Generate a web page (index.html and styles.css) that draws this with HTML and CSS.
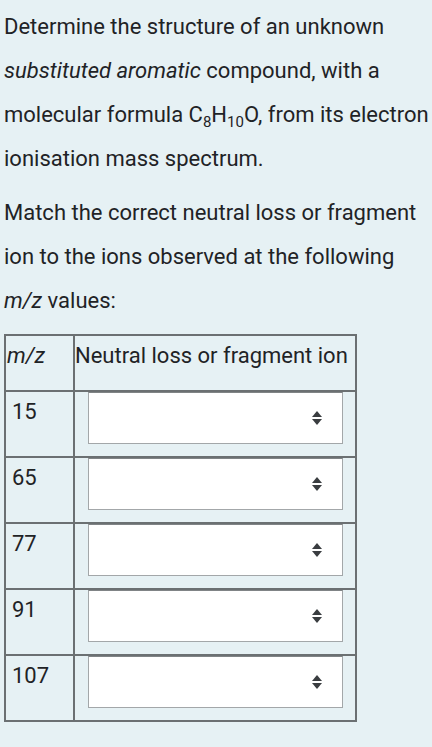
FILE: index.html
```html
<!DOCTYPE html>
<html lang="en">
<head>
<meta charset="utf-8">
<title>Mass spectrum question</title>
<link rel="stylesheet" href="styles.css">
</head>
<body>
<main class="question">
  <p class="para">Determine the structure of an unknown <em>substituted aromatic</em> compound, with a molecular formula C<sub>8</sub>H<sub>10</sub>O, from its electron ionisation mass spectrum.</p>
  <p class="para">Match the correct neutral loss or fragment ion to the ions observed at the following <em>m/z</em> values:</p>
  <table class="match">
    <thead>
      <tr>
        <th class="col-mz"><em>m/z</em></th>
        <th class="col-ion">Neutral loss or fragment ion</th>
      </tr>
    </thead>
    <tbody>
      <tr><td class="mz">15</td><td class="ion"><div class="select"><span class="arrows"></span></div></td></tr>
      <tr><td class="mz">65</td><td class="ion"><div class="select"><span class="arrows"></span></div></td></tr>
      <tr><td class="mz">77</td><td class="ion"><div class="select"><span class="arrows"></span></div></td></tr>
      <tr><td class="mz">91</td><td class="ion"><div class="select"><span class="arrows"></span></div></td></tr>
      <tr><td class="mz">107</td><td class="ion"><div class="select"><span class="arrows"></span></div></td></tr>
    </tbody>
  </table>
</main>
</body>
</html>
```

FILE: styles.css
```css
html, body {
  margin: 0;
  padding: 0;
  background: #e6f1f4;
}
body {
  font-family: Roboto, "Noto Sans", sans-serif;
  font-size: 22px;
  color: #1f2326;
}
.question {
  padding: 5px 0 0 4px;
}
.para {
  margin: 0 0 10px 0;
  line-height: 44px;
}
.para sub {
  font-size: 15px;
  line-height: 0;
  vertical-align: -5px;
}
.match {
  border-collapse: collapse;
  margin-top: 11px;
  width: 353px;
}
.match th, .match td {
  border: 2px solid #6b7072;
  vertical-align: top;
  line-height: 40px;
}
.match th {
  font-weight: normal;
  text-align: left;
  height: 56px;
  padding: 0 0 10px 1px;
  box-sizing: border-box;
}
.col-mz { width: 69px; }
.match th.col-ion { padding-left: 0; }
.match td.mz {
  padding: 0 0 0 6px;
  height: 66px;
  box-sizing: border-box;
}
.match td.ion {
  padding: 0 12px 12px 13px;
}
.select {
  height: 52px;
  box-sizing: border-box;
  background: #ffffff;
  border: 1.5px solid #a3a7a9;
  border-top-color: #808486;
  display: flex;
  align-items: center;
  justify-content: flex-end;
  padding-right: 20px;
}
.arrows {
  display: flex;
  flex-direction: column;
  align-items: center;
  gap: 2px;
}
.arrows::before, .arrows::after {
  content: "";
  width: 0;
  height: 0;
  border-left: 5px solid transparent;
  border-right: 5px solid transparent;
}
.arrows::before {
  border-bottom: 6px solid #3a3d40;
}
.arrows::after {
  border-top: 6px solid #3a3d40;
}
```
